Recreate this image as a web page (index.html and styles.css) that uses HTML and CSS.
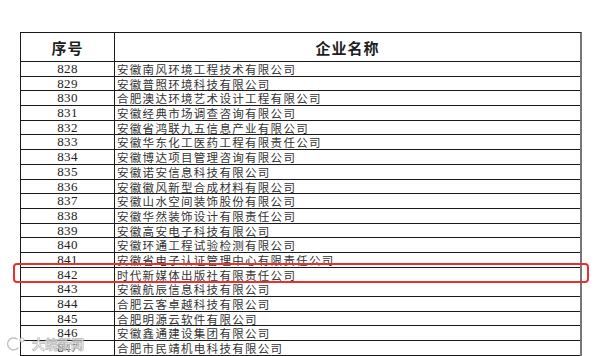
FILE: index.html
```html
<!DOCTYPE html>
<html lang="zh-CN">
<head>
<meta charset="utf-8">
<title>企业名称</title>
<link rel="stylesheet" href="styles.css">
</head>
<body>
<div class="page">
  <div class="sheet">
    <div class="head">
      <div class="c1">序号</div>
      <div class="c2">企业名称</div>
    </div>
    <div class="row"><div class="c1">828</div><div class="c2">安徽南风环境工程技术有限公司</div></div>
    <div class="row"><div class="c1">829</div><div class="c2">安徽普照环境科技有限公司</div></div>
    <div class="row"><div class="c1">830</div><div class="c2">合肥澳达环境艺术设计工程有限公司</div></div>
    <div class="row"><div class="c1">831</div><div class="c2">安徽经典市场调查咨询有限公司</div></div>
    <div class="row"><div class="c1">832</div><div class="c2">安徽省鸿联九五信息产业有限公司</div></div>
    <div class="row"><div class="c1">833</div><div class="c2">安徽华东化工医药工程有限责任公司</div></div>
    <div class="row"><div class="c1">834</div><div class="c2">安徽博达项目管理咨询有限公司</div></div>
    <div class="row"><div class="c1">835</div><div class="c2">安徽诺安信息科技有限公司</div></div>
    <div class="row"><div class="c1">836</div><div class="c2">安徽徽风新型合成材料有限公司</div></div>
    <div class="row"><div class="c1">837</div><div class="c2">安徽山水空间装饰股份有限公司</div></div>
    <div class="row"><div class="c1">838</div><div class="c2">安徽华然装饰设计有限责任公司</div></div>
    <div class="row"><div class="c1">839</div><div class="c2">安徽高安电子科技有限公司</div></div>
    <div class="row"><div class="c1">840</div><div class="c2">安徽环通工程试验检测有限公司</div></div>
    <div class="row"><div class="c1">841</div><div class="c2">安徽省电子认证管理中心有限责任公司</div></div>
    <div class="row marked"><div class="c1">842</div><div class="c2">时代新媒体出版社有限责任公司</div><div class="highlight"></div></div>
    <div class="row"><div class="c1">843</div><div class="c2">安徽航辰信息科技有限公司</div></div>
    <div class="row"><div class="c1">844</div><div class="c2">合肥云客卓越科技有限公司</div></div>
    <div class="row"><div class="c1">845</div><div class="c2">合肥明源云软件有限公司</div></div>
    <div class="row"><div class="c1">846</div><div class="c2">安徽鑫通建设集团有限公司</div></div>
    <div class="row"><div class="c1">847</div><div class="c2">合肥市民靖机电科技有限公司</div></div>
  </div>
  <div class="watermark">
    <svg class="wm-logo" width="24" height="16" viewBox="0 0 24 16">
      <path d="M13 3 A6 6 0 1 0 14 12" fill="none" stroke="#fff" stroke-width="3.2" stroke-linecap="round"/>
      <path d="M13 3 A6 6 0 1 0 14 12" fill="none" stroke="#b8b8b8" stroke-width="1.4" stroke-linecap="round"/>
      <circle cx="18" cy="4" r="2.2" fill="#fff" stroke="#b8b8b8" stroke-width="1"/>
    </svg>
    <span class="wm-text">大皖新闻</span>
  </div>
</div>
</body>
</html>
```
FILE: styles.css
```css
html, body {
  margin: 0;
  padding: 0;
  background: #ffffff;
}
.page {
  position: relative;
  width: 600px;
  height: 356px;
  overflow: hidden;
  background: #ffffff;
}
.sheet {
  margin: 32px 0 0 20px;
  width: 562px;
  box-sizing: border-box;
  border-top: 1px solid #1a1a1a;
  border-left: 1px solid #1a1a1a;
  border-right: 2px solid #777777;
  font-family: "Noto Sans CJK SC", sans-serif;
  color: #2a2a2a;
}
.head, .row {
  display: flex;
  box-sizing: border-box;
  border-bottom: 1px solid #1a1a1a;
}
.head {
  height: 29px;
}
.row {
  height: 14.7px;
}
.c1 {
  width: 94px;
  flex: none;
  box-sizing: border-box;
  border-right: 1px solid #1a1a1a;
  text-align: center;
}
.c2 {
  flex: 1;
  min-width: 0;
  white-space: nowrap;
}
.head .c1, .head .c2 {
  display: flex;
  align-items: center;
  justify-content: center;
  font-weight: 700;
  font-size: 15px;
  letter-spacing: 1px;
  color: #1e1e1e;
  padding-top: 1px;
}
.row .c1 {
  font-family: "Liberation Serif", "Times New Roman", serif;
  font-size: 13px;
  letter-spacing: 0.4px;
  line-height: 14px;
  color: #222222;
}
.row .c2 {
  padding-left: 2px;
  font-size: 11.5px;
  letter-spacing: 1.3px;
  line-height: 14px;
  color: #333333;
}
.marked {
  position: relative;
}
.highlight {
  position: absolute;
  left: -8px;
  right: -9px;
  top: -5px;
  bottom: -2px;
  border: 2px solid #e8312c;
  border-radius: 4px;
  pointer-events: none;
}
.watermark {
  position: absolute;
  left: 4px;
  top: 334px;
  display: flex;
  align-items: center;
  gap: 4px;
  opacity: 0.85;
}
.wm-text {
  font-family: "Noto Sans CJK SC", sans-serif;
  font-weight: 700;
  font-size: 13px;
  color: #ffffff;
  -webkit-text-stroke: 0.8px #b0b0b0;
  letter-spacing: 0;
}
```
